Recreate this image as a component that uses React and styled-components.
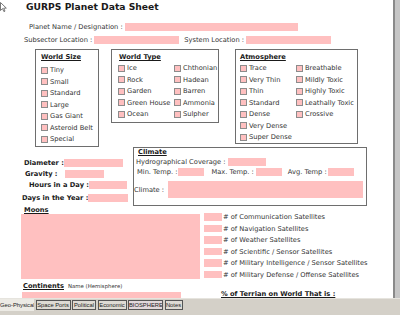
import React from "react";
import styled, { createGlobalStyle } from "styled-components";

const FONT = `"DejaVu Sans", Verdana, sans-serif`;
const PINK = "#ffc0c0";

const GlobalStyle = createGlobalStyle`
  html, body {
    margin: 0;
    padding: 0;
    background: #fff;
  }
  #root {
    width: 400px;
    height: 315px;
    overflow: hidden;
  }
`;

const Window = styled.div`
  width: 400px;
  height: 315px;
  display: flex;
  flex-direction: column;
  font-family: ${FONT};
  font-size: 6.7px;
  color: #333;
  background: #fff;
`;

const Main = styled.div`
  display: flex;
  height: 298px;
`;

const Sheet = styled.div`
  flex: 1;
  position: relative;
  overflow: hidden;
  display: flex;
  flex-direction: column;
`;

const ScrollEdge = styled.div`
  width: 5px;
  border-left: 2px solid #8a8a8a;
  background: #c6c6c6;
`;

const Cursor = styled.svg`
  position: absolute;
  left: 0;
  top: 2px;
`;

const Title = styled.h1`
  margin: 0;
  font-size: 9.2px;
  font-weight: bold;
  line-height: 14px;
  padding-left: 26px;
  color: #1a1a1a;
`;

const Row = styled.div`
  display: flex;
  align-items: center;
  height: ${(p) => p.$h || 8}px;
  margin-top: ${(p) => p.$mt || 0}px;
  padding-left: ${(p) => p.$pl || 0}px;
  gap: ${(p) => (p.$gap === undefined ? 2 : p.$gap)}px;
`;

const Label = styled.span`
  white-space: nowrap;
  flex-shrink: 0;
  width: ${(p) => (p.$w ? `${p.$w}px` : "auto")};
  margin-left: ${(p) => p.$ml || 0}px;
  font-weight: ${(p) => (p.$bold ? "bold" : "normal")};
  color: ${(p) => (p.$bold ? "#1a1a1a" : "#333")};
`;

const Field = styled.div`
  flex-shrink: 0;
  width: ${(p) => p.$w}px;
  height: ${(p) => p.$h || 8}px;
  margin-left: ${(p) => p.$ml || 0}px;
  margin-top: ${(p) => p.$mt || 0}px;
  background: ${PINK};
`;

const BoxRow = styled.div`
  display: flex;
  align-items: flex-start;
  margin-top: 5px;
`;

const Box = styled.div`
  box-sizing: border-box;
  border: 1px solid #6e6e6e;
  width: ${(p) => p.$w}px;
  height: ${(p) => p.$h}px;
  margin-left: ${(p) => p.$ml || 0}px;
  padding: ${(p) => p.$pt || 0}px 0 0 ${(p) => p.$pl || 0}px;
  flex-shrink: 0;
`;

const BoxTitle = styled.div`
  font-weight: bold;
  text-decoration: underline;
  line-height: 8px;
  color: #1a1a1a;
  margin-left: ${(p) => p.$ml || 0}px;
`;

const Columns = styled.div`
  display: flex;
  margin-top: ${(p) => p.$mt}px;
`;

const Column = styled.div`
  display: flex;
  flex-direction: column;
  width: ${(p) => (p.$w ? `${p.$w}px` : "auto")};
`;

const Item = styled.div`
  display: flex;
  align-items: center;
  gap: 2px;
  height: 11.5px;
  white-space: nowrap;
`;

const Check = styled.span`
  box-sizing: border-box;
  width: 7px;
  height: 7px;
  border: 1px solid #8c8c8c;
  background: ${PINK};
  flex-shrink: 0;
`;

const LowerRow = styled.div`
  display: flex;
  align-items: flex-start;
`;

const FieldsCol = styled.div`
  width: 133px;
  padding-top: 12px;
  display: flex;
  flex-direction: column;
`;

const ClimateBox = styled.div`
  box-sizing: border-box;
  width: 234px;
  height: 59px;
  border: 1px solid #6e6e6e;
  display: flex;
  flex-direction: column;
`;

const BottomRow = styled.div`
  display: flex;
  align-items: flex-start;
`;

const MoonsCol = styled.div`
  margin-left: 21px;
  width: 179px;
  display: flex;
  flex-direction: column;
`;

const SectionTitle = styled.div`
  font-weight: bold;
  text-decoration: underline;
  line-height: 8px;
  color: #1a1a1a;
  padding-left: ${(p) => p.$pl || 0}px;
  margin-top: ${(p) => p.$mt || 0}px;
  white-space: nowrap;
`;

const Note = styled.span`
  font-size: 5.4px;
  margin-left: 4px;
  color: #333;
`;

const SatCol = styled.div`
  margin-left: 4px;
  padding-top: 5.25px;
  display: flex;
  flex-direction: column;
`;

const SatRow = styled.div`
  display: flex;
  align-items: center;
  gap: 1px;
  height: 11.5px;
  white-space: nowrap;
`;

const TabBar = styled.div`
  height: 17px;
  box-sizing: border-box;
  background: #d4d0c8;
  border-top: 1px solid #e6e4de;
  display: flex;
  align-items: flex-start;
  gap: 1.5px;
  font-family: "Liberation Sans", Arial, sans-serif;
  font-size: 5.8px;
`;

const Tab = styled.div`
  box-sizing: border-box;
  width: ${(p) => p.$w}px;
  height: ${(p) => (p.$active ? 12 : 10)}px;
  margin-top: ${(p) => (p.$active ? 0 : 1)}px;
  line-height: ${(p) => (p.$active ? 12 : 8)}px;
  text-align: center;
  overflow: hidden;
  border: ${(p) => (p.$active ? "none" : "1px solid #555")};
  background: ${(p) => (p.$active ? "#eceae4" : p.$tint ? "#e2d8dc" : "#dedbd4")};
  color: #222;
  white-space: nowrap;
`;

const worldSize = ["Tiny", "Small", "Standard", "Large", "Gas Giant", "Asteroid Belt", "Special"];
const worldType1 = ["Ice", "Rock", "Garden", "Green House", "Ocean"];
const worldType2 = ["Chthonian", "Hadean", "Barren", "Ammonia", "Sulpher"];
const atmo1 = ["Trace", "Very Thin", "Thin", "Standard", "Dense", "Very Dense", "Super Dense"];
const atmo2 = ["Breathable", "Mildly Toxic", "Highly Toxic", "Leathally Toxic", "Crossive"];
const satellites = [
  "# of Communication Satellites",
  "# of Navigation Satellites",
  "# of Weather Satellites",
  "# of Scientific / Sensor Satellites",
  "# of Military Intelligence / Sensor Satellites",
  "# of Military Defense / Offense Satellites",
];
const tabs = [
  { name: "Geo-Physical", w: 34 },
  { name: "Space Ports", w: 35 },
  { name: "Political", w: 24 },
  { name: "Economic", w: 29 },
  { name: "BIOSPHERE", w: 35 },
  { name: "Notes", w: 18 },
];

const CheckList = ({ items, w }) => (
  <Column $w={w}>
    {items.map((it) => (
      <Item key={it}>
        <Check />
        {it}
      </Item>
    ))}
  </Column>
);

const App = () => {
  return (
    <>
      <GlobalStyle />
      <Window>
        <Main>
          <Sheet>
            <Cursor width="7" height="11" viewBox="0 0 7 11">
              <path d="M0.5 0.5 L0.5 8.5 L2.5 6.6 L3.9 9.6 L5 9.1 L3.7 6.2 L6.3 6.1 Z" fill="#fff" stroke="#555" strokeWidth="0.8" />
            </Cursor>
            <Title>GURPS Planet Data Sheet</Title>

            <Row $mt={9} $pl={29}>
              <Label>Planet Name / Designation :</Label>
              <Field $w={173} />
            </Row>
            <Row $mt={5} $pl={24}>
              <Label>Subsector Location :</Label>
              <Field $w={85} />
              <Label $ml={3}>System Location :</Label>
              <Field $w={85} />
            </Row>

            <BoxRow>
              <Box $w={64} $h={98} $ml={35} $pt={3} $pl={5}>
                <BoxTitle>World Size</BoxTitle>
                <Columns $mt={3.25}>
                  <CheckList items={worldSize} />
                </Columns>
              </Box>
              <Box $w={108} $h={74} $ml={12} $pt={3} $pl={6}>
                <BoxTitle $ml={1}>World Type</BoxTitle>
                <Columns $mt={1.25}>
                  <CheckList items={worldType1} w={56} />
                  <CheckList items={worldType2} />
                </Columns>
              </Box>
              <Box $w={123} $h={95} $ml={16} $pt={3} $pl={4}>
                <BoxTitle>Atmosphere</BoxTitle>
                <Columns $mt={1.25}>
                  <CheckList items={atmo1} w={56} />
                  <CheckList items={atmo2} />
                </Columns>
              </Box>
            </BoxRow>

            <LowerRow>
              <FieldsCol>
                <Row $pl={24} $gap={0}>
                  <Label $bold $w={40}>Diameter :</Label>
                  <Field $w={59} />
                </Row>
                <Row $mt={3} $pl={25} $gap={0}>
                  <Label $bold $w={40}>Gravity :</Label>
                  <Field $w={39} />
                </Row>
                <Row $mt={3} $pl={29} $gap={0}>
                  <Label $bold $w={60}>Hours in a Day :</Label>
                  <Field $w={38} />
                </Row>
                <Row $mt={5} $pl={22} $gap={0}>
                  <Label $bold $w={66}>Days in the Year :</Label>
                  <Field $w={40} />
                </Row>
              </FieldsCol>

              <ClimateBox>
                <BoxTitle $ml={4}>Climate</BoxTitle>
                <Row $mt={2} $pl={2}>
                  <Label>Hydrographical Coverage :</Label>
                  <Field $w={38} />
                </Row>
                <Row $mt={2} $pl={3} $gap={0}>
                  <Label>Min. Temp. :</Label>
                  <Field $w={26} $ml={1} />
                  <Label $ml={7}>Max. Temp. :</Label>
                  <Field $w={26} $ml={2} />
                  <Label $ml={6}>Avg. Temp :</Label>
                  <Field $w={26} $ml={1.5} />
                </Row>
                <Row $mt={5} $h={17} $gap={0}>
                  <Label $w={34}>Climate :</Label>
                  <Field $w={195} $h={17} />
                </Row>
              </ClimateBox>
            </LowerRow>

            <BottomRow>
              <MoonsCol>
                <SectionTitle $pl={3}>Moons</SectionTitle>
                <Field $w={179} $h={65} />
                <Row $mt={3} $pl={2} $gap={0}>
                  <SectionTitle>Continents</SectionTitle>
                  <Note>Name (Hemisphere)</Note>
                </Row>
                <Field $w={159} $ml={1} $mt={2} />
              </MoonsCol>
              <SatCol>
                {satellites.map((s) => (
                  <SatRow key={s}>
                    <Field $w={18} $h={7.5} />
                    {s}
                  </SatRow>
                ))}
                <SectionTitle $pl={17} $mt={9.75}>% of Terrian on World That is :</SectionTitle>
              </SatCol>
            </BottomRow>
          </Sheet>
          <ScrollEdge />
        </Main>
        <TabBar>
          {tabs.map((t, i) => (
            <Tab key={t.name} $w={t.w} $active={i === 0} $tint={t.name === "BIOSPHERE"}>
              {t.name}
            </Tab>
          ))}
        </TabBar>
      </Window>
    </>
  );
};

export default App;
